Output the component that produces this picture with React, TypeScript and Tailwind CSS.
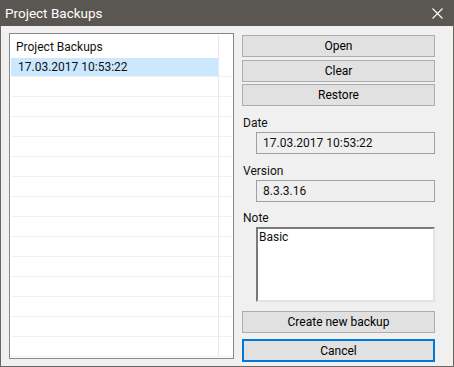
import React from 'react';

const ROWS = 14;

function Button({ label, focused }: { label: string; focused?: boolean }) {
  return (
    <button
      className={`w-full flex items-center justify-center bg-[#e1e1e1] text-black text-[12px] ${
        focused ? 'h-[23px] border-2 border-[#0078d7]' : 'h-[22px] border border-[#adadad]'
      }`}
    >
      {label}
    </button>
  );
}

function Field({ label, value, gap }: { label: string; value: string; gap: string }) {
  return (
    <div className={gap}>
      <div className="h-[15px] leading-[15px] text-[12px] pl-[1px]">{label}</div>
      <div className="mt-[1px] ml-[14px] h-[22px] border border-[#a0a0a0] bg-[#efefef] flex items-center pl-[6px] text-[12px]">
        {value}
      </div>
    </div>
  );
}

export default function App() {
  return (
    <div
      className="w-[454px] h-[367px] bg-[#f0f0f0] text-[#111] overflow-hidden"
      style={{ fontFamily: 'Roboto, "Noto Sans", sans-serif' }}
    >
      {/* title bar */}
      <div className="h-[26px] bg-[#5a5651] flex items-center justify-between pl-[5px] pr-[11px]">
        <span className="text-white text-[13.5px]">Project Backups</span>
        <svg width="11" height="11" viewBox="0 0 11 11" className="text-white">
          <path d="M0.5 0.5 L10.5 10.5 M10.5 0.5 L0.5 10.5" stroke="currentColor" strokeWidth="1.1" />
        </svg>
      </div>

      <div className="h-[341px] border-x border-b border-[#6b6763] flex pl-[8px] pt-[7px]">
        {/* list */}
        <div className="w-[225px] h-[326px] border border-[#828790] bg-white p-[1px] flex flex-col overflow-hidden">
          <div className="flex h-[25px]">
            <div className="w-[207px] flex items-center pl-[5px] text-[12px]">Project Backups</div>
            <div className="flex-1 border-l border-[#e8e8f2]" />
          </div>
          <div className="flex h-[20px] border-b border-[#f0f0f0]">
            <div className="w-[207px] bg-[#cce8ff] flex items-center pl-[7px] text-[12px]">
              17.03.2017 10:53:22
            </div>
            <div className="flex-1 border-l border-[#e8e8f2]" />
          </div>
          {Array.from({ length: ROWS }).map((_, i) => (
            <div key={i} className="flex h-[20px] shrink-0 border-b border-[#f0f0f0]">
              <div className="w-[207px]" />
              <div className="flex-1 border-l border-[#e8e8f2]" />
            </div>
          ))}
          <div className="flex flex-1">
            <div className="w-[207px]" />
            <div className="flex-1 border-l border-[#e8e8f2]" />
          </div>
        </div>

        {/* right column */}
        <div className="ml-[8px] w-[193px] pt-[2px] flex flex-col">
          <Button label="Open" />
          <div className="mt-[3px]">
            <Button label="Clear" />
          </div>
          <div className="mt-[2px]">
            <Button label="Restore" />
          </div>
          <Field label="Date" value="17.03.2017 10:53:22" gap="mt-[10px]" />
          <Field label="Version" value="8.3.3.16" gap="mt-[10px]" />
          <div className="mt-[9px]">
            <div className="h-[15px] leading-[15px] text-[12px] pl-[1px]">Note</div>
            <div className="mt-[1px] ml-[14px] h-[75px] bg-white border-2 border-t-[#7a7a7a] border-l-[#7a7a7a] border-r-[#e3e3e3] border-b-[#e3e3e3] pl-[1px] text-[12px] leading-[16px]">
              Basic
            </div>
          </div>
          <div className="mt-[9px]">
            <Button label="Create new backup" />
          </div>
          <div className="mt-[6px]">
            <Button label="Cancel" focused />
          </div>
        </div>
      </div>
    </div>
  );
}
